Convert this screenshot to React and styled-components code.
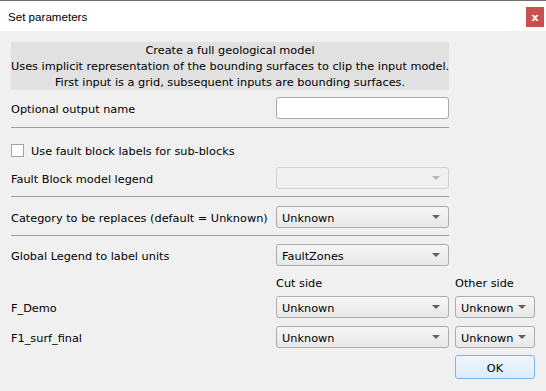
import React from "react";
import styled, { createGlobalStyle } from "styled-components";

const Global = createGlobalStyle`
  html, body { margin: 0; padding: 0; background: #f0f0f0; }
  body {
    font-family: "DejaVu Sans", Verdana, sans-serif;
    font-size: 11.3px;
    color: #000;
  }
`;

const Window = styled.div`
  width: 546px;
  height: 391px;
  background: #f0f0f0;
  display: flex;
  flex-direction: column;
  overflow: hidden;
`;

const TitleBar = styled.div`
  height: 30px;
  flex: none;
  border-top: 1px solid #6f6f6f;
  background: #fff;
  display: flex;
  align-items: flex-start;
  justify-content: space-between;
`;

const Title = styled.span`
  margin: 9px 0 0 8px;
  font-family: "Liberation Sans", Arial, sans-serif;
  font-size: 11.6px;
  line-height: 14px;
`;

const Close = styled.div`
  margin: 6px 2px 0 0;
  width: 18px;
  height: 20px;
  background: #c75050;
  color: #fff;
  font-weight: bold;
  font-size: 11px;
  display: flex;
  align-items: center;
  justify-content: center;
`;

const Body = styled.div`
  padding: 11px 0 0 11px;
  display: flex;
  flex-direction: column;
`;

const Row = styled.div`
  display: grid;
  grid-template-columns: 259px 173px 80px;
  column-gap: 6px;
  align-items: center;
  height: ${(p) => p.$h || 22}px;
  margin-top: ${(p) => p.$mt || 0}px;
`;

const Header = styled.div`
  grid-column: 1 / span 2;
  background: #e1e1e1;
  text-align: center;
  line-height: 16px;
  height: 48px;
  padding-top: 1px;
  box-sizing: border-box;
  white-space: nowrap;
`;

const Rule = styled.div`
  width: 438px;
  height: 1px;
  background: #a0a0a0;
  margin-top: ${(p) => p.$mt || 0}px;
`;

const Label = styled.span`
  white-space: nowrap;
  padding-top: 2px;
  grid-column: ${(p) => p.$col || "auto"};
`;

const TextInput = styled.div`
  height: 22px;
  box-sizing: border-box;
  border: 1px solid #ababab;
  border-radius: 3px;
  background: #fff;
`;

const Combo = styled.div`
  height: 22px;
  box-sizing: border-box;
  border: 1px solid ${(p) => (p.$disabled ? "#d0d0d0" : "#acacac")};
  border-radius: 3px;
  background: ${(p) =>
    p.$disabled ? "#f0f0f0" : "linear-gradient(#f6f6f6, #e8e8e8)"};
  display: flex;
  align-items: center;
  justify-content: space-between;
  padding: 0 8px 0 5px;
`;

const ComboText = styled.span`
  padding-top: 2px;
`;

const Arrow = styled.span`
  width: 0;
  height: 0;
  border-left: 4px solid transparent;
  border-right: 4px solid transparent;
  border-top: 4px solid ${(p) => (p.$disabled ? "#b4b4b4" : "#606060")};
`;

const CheckRow = styled.label`
  grid-column: 1 / span 2;
  display: flex;
  align-items: center;
  gap: 7px;
`;

const CheckText = styled.span`
  padding-top: 2px;
`;

const Box = styled.span`
  width: 13px;
  height: 13px;
  box-sizing: border-box;
  border: 1px solid #a3a3a3;
  background: #fff;
`;

const Button = styled.div`
  grid-column: 3;
  height: 24px;
  box-sizing: border-box;
  border: 1px solid #7eb4ea;
  border-radius: 3px;
  background: linear-gradient(#edf5fc, #dcecfc);
  display: flex;
  align-items: center;
  justify-content: center;
  padding-top: 2px;
`;

const Select = ({ value = "", disabled }) => (
  <Combo $disabled={disabled}>
    <ComboText>{value}</ComboText>
    <Arrow $disabled={disabled} />
  </Combo>
);

export default function App() {
  return (
    <>
      <Global />
      <Window>
        <TitleBar>
          <Title>Set parameters</Title>
          <Close>x</Close>
        </TitleBar>
        <Body>
          <Row $h={48}>
            <Header>
              Create a full geological model
              <br />
              Uses implicit representation of the bounding surfaces to clip the input model.
              <br />
              First input is a grid, subsequent inputs are bounding surfaces.
            </Header>
          </Row>
          <Row $mt={7}>
            <Label>Optional output name</Label>
            <TextInput />
          </Row>
          <Rule $mt={8} />
          <Row $mt={11}>
            <CheckRow>
              <Box />
              <CheckText>Use fault block labels for sub-blocks</CheckText>
            </CheckRow>
          </Row>
          <Row $mt={6}>
            <Label>Fault Block model legend</Label>
            <Select disabled />
          </Row>
          <Rule $mt={7} />
          <Row $mt={9}>
            <Label>Category to be replaces (default = Unknown)</Label>
            <Select value="Unknown" />
          </Row>
          <Rule $mt={7} />
          <Row $mt={8}>
            <Label>Global Legend to label units</Label>
            <Select value="FaultZones" />
          </Row>
          <Row $mt={8} $h={16}>
            <Label $col="2">Cut side</Label>
            <Label>Other side</Label>
          </Row>
          <Row $mt={6}>
            <Label>F_Demo</Label>
            <Select value="Unknown" />
            <Select value="Unknown" />
          </Row>
          <Row $mt={8}>
            <Label>F1_surf_final</Label>
            <Select value="Unknown" />
            <Select value="Unknown" />
          </Row>
          <Row $mt={7} $h={24}>
            <Button>OK</Button>
          </Row>
        </Body>
      </Window>
    </>
  );
}
